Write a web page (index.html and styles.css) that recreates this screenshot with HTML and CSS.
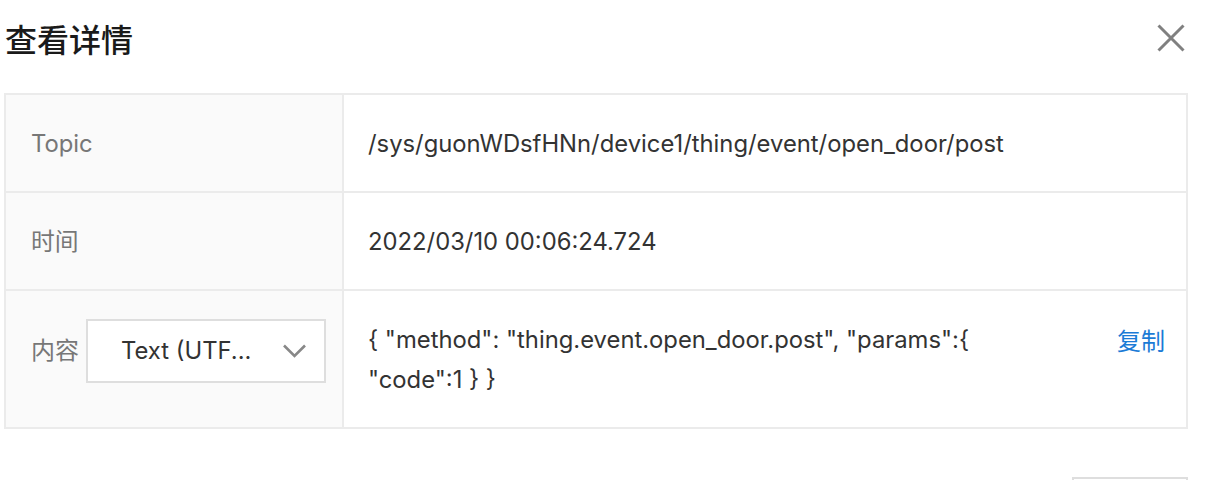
FILE: index.html
```html
<!DOCTYPE html>
<html lang="zh-CN">
<head>
<meta charset="utf-8">
<title>查看详情</title>
<link rel="stylesheet" href="styles.css">
</head>
<body>
<div class="dialog">
  <header class="dialog-header">
    <h1 class="dialog-title">查看详情</h1>
    <button class="close-btn" aria-label="关闭">
      <svg width="28" height="28" viewBox="0 0 28 28"><path d="M1.5 1.5 L26.5 26.5 M26.5 1.5 L1.5 26.5" stroke="#808080" stroke-width="3" fill="none"/></svg>
    </button>
  </header>
  <div class="detail-table">
    <div class="row">
      <div class="label">Topic</div>
      <div class="value">/sys/guonWDsfHNn/device1/thing/event/open_door/post</div>
    </div>
    <div class="row">
      <div class="label">时间</div>
      <div class="value">2022/03/10 00:06:24.724</div>
    </div>
    <div class="row">
      <div class="label label-content">
        <span class="label-text">内容</span>
        <div class="select">
          <span class="select-text">Text (UTF...</span>
          <svg width="23" height="14" viewBox="0 0 23 14"><path d="M1 1.5 L11.5 12 L22 1.5" stroke="#888" stroke-width="2.6" fill="none"/></svg>
        </div>
      </div>
      <div class="value value-content">
        <div class="json">{ "method": "thing.event.open_door.post", "params":{ "code":1 } }</div>
        <a class="copy" href="#">复制</a>
      </div>
    </div>
  </div>
  <footer class="dialog-footer">
    <button class="footer-btn" aria-label="关闭"></button>
  </footer>
</div>
</body>
</html>
```
FILE: styles.css
```css
html, body {
  margin: 0;
  padding: 0;
  background: #fff;
  overflow: hidden;
}
body {
  font-family: Inter, "Noto Sans CJK SC", sans-serif;
  color: #333;
}
.dialog {
  width: 1216px;
}
.dialog-header {
  height: 76px;
  display: flex;
  align-items: center;
  justify-content: space-between;
  padding: 0 31px 0 5px;
  margin-bottom: 17px;
}
.dialog-title {
  margin: 0;
  font-family: "Noto Sans CJK SC", sans-serif;
  font-size: 32px;
  font-weight: 500;
  color: #1a1a1a;
  line-height: 1;
}
.close-btn {
  border: 0;
  background: none;
  padding: 0;
  width: 28px;
  height: 28px;
  display: block;
}
.close-btn svg { display: block; }
.detail-table {
  margin-left: 4px;
  width: 1184px;
  box-sizing: border-box;
  border: 2px solid #ebebeb;
}
.row {
  display: flex;
  border-bottom: 2px solid #ebebeb;
}
.row:last-child { border-bottom: 0; }
.label {
  width: 338px;
  flex: none;
  box-sizing: border-box;
  background: #fafafa;
  border-right: 2px solid #ebebeb;
  padding: 29px 16px 27px 25px;
  font-size: 23.8px;
  line-height: 40px;
  color: #777;
}
.label-content {
  display: flex;
  align-items: flex-start;
  gap: 7px;
  padding-top: 28px;
}
.label-text {
  flex: none;
  white-space: nowrap;
  font-size: 24px;
  margin-top: 12px;
}
.select {
  flex: none;
  width: 240px;
  height: 64px;
  box-sizing: border-box;
  border: 2px solid #dedede;
  background: #fff;
  display: flex;
  align-items: center;
  justify-content: space-between;
  padding: 0 18px 0 33px;
  color: #333;
  white-space: nowrap;
}
.select svg { display: block; flex: none; }
.value {
  flex: 1;
  padding: 29px 21px 27px 24px;
  font-size: 23.8px;
  line-height: 40px;
  color: #333;
  background: #fff;
}
.value-content {
  display: flex;
  justify-content: space-between;
  align-items: flex-start;
}
.json {
  max-width: 680px;
}
.copy {
  font-family: "Noto Sans CJK SC", sans-serif;
  color: #1b7bd6;
  text-decoration: none;
  font-size: 24px;
  white-space: nowrap;
}
.dialog-footer {
  display: flex;
  justify-content: flex-end;
  padding-right: 28px;
  margin-top: 48px;
}
.footer-btn {
  width: 116px;
  height: 60px;
  border: 2px solid #dedede;
  background: #fff;
}
```
